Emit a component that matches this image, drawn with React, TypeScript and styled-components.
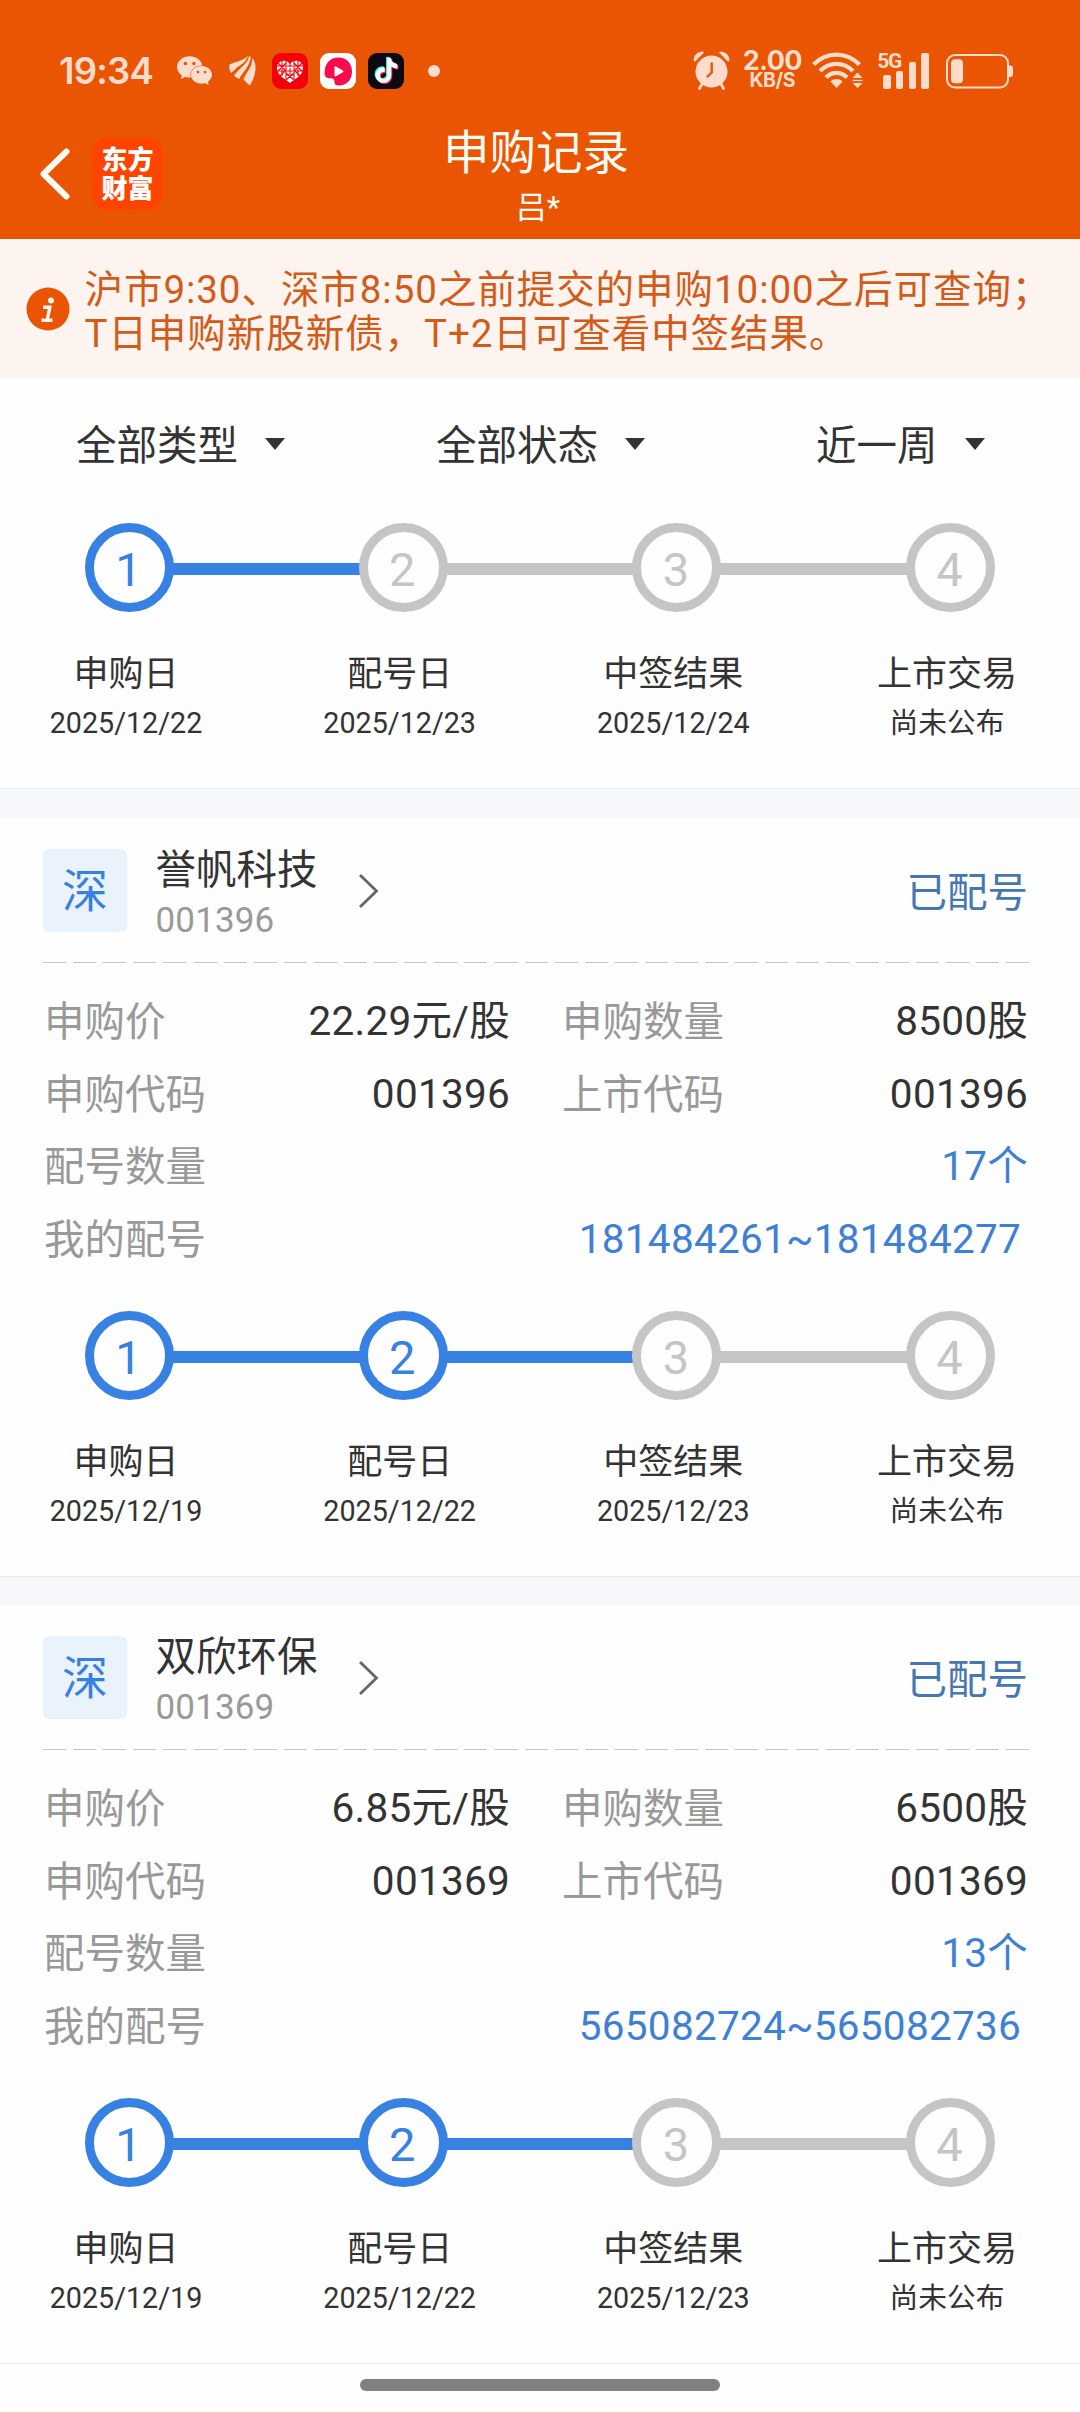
import React from "react";
import styled, { createGlobalStyle } from "styled-components";
import { SiTiktok, SiWechat } from "react-icons/si";

const GlobalStyle = createGlobalStyle`
  * { box-sizing: border-box; }
  body {
    margin: 0;
    background: #fefefe;
    color: #333;
    font-family: Roboto, "Noto Sans CJK SC", sans-serif;
  }
`;

const BLUE = "#3681e2";
const GREY = "#c5c5c5";
const STATUS_INK = "#fddccb";

const Screen = styled.main`
  width: 1080px;
  height: 2412px;
  display: flex;
  flex-direction: column;
  overflow: hidden;
`;

const Header = styled.header`
  height: 239px;
  flex: none;
  background: #e95503;
  color: #fffaf2;
`;

const StatusBar = styled.div`
  height: 118px;
  padding: 23px 66px 0 59px;
  display: flex;
  align-items: center;
  color: ${STATUS_INK};

  svg {
    display: block;
    flex: none;
  }
`;

const Clock = styled.span`
  width: 93px;
  font: 600 36.5px/40px Inter, sans-serif;
  letter-spacing: -0.8px;
  white-space: nowrap;
`;

const WechatSlot = styled.span`
  margin-left: 25px;
`;

const WingSlot = styled.span`
  margin-left: 17px;
`;

const AppTiles = styled.span`
  display: flex;
  gap: 12px;
  margin-left: 16px;
`;

const AppTile = styled.span<{ $bg: string }>`
  position: relative;
  width: 36px;
  height: 36px;
  border-radius: 9px;
  background: ${(p) => p.$bg};
  overflow: hidden;
`;

const TikTokLayer = styled(SiTiktok)<{ $dx: number; $dy: number }>`
  position: absolute;
  left: ${(p) => 5.5 + p.$dx}px;
  top: ${(p) => 5 + p.$dy}px;
`;

const MoreDot = styled.span`
  width: 12px;
  height: 12px;
  margin-left: 24px;
  border-radius: 50%;
  background: ${STATUS_INK};
`;

const StatusRight = styled.div`
  display: flex;
  align-items: center;
  margin-left: auto;
`;

const NetSpeed = styled.span`
  display: flex;
  flex-direction: column;
  align-items: center;
  width: 60px;
  margin: 0 10px 0 12px;
  padding-bottom: 2px;
  font-family: Inter, sans-serif;
  font-weight: 700;
  white-space: nowrap;
`;

const SpeedValue = styled.span`
  font-size: 27px;
  line-height: 21px;
  letter-spacing: -0.6px;
`;

const SpeedUnit = styled.span`
  font-size: 19.5px;
  line-height: 19px;
  letter-spacing: -0.4px;
`;

const Signal = styled.span`
  display: flex;
  align-items: flex-end;
  height: 36px;
  margin: 0 12px 0 14px;
`;

const NetworkType = styled.span`
  align-self: flex-start;
  width: 6px;
  font: 700 21px/16px "Roboto", sans-serif;
  letter-spacing: -1.4px;
`;

const Bar = styled.i<{ $h: number }>`
  width: 7.5px;
  height: ${(p) => p.$h}px;
  margin-right: 5.2px;
  border-radius: 2px;
  background: ${STATUS_INK};
`;

const NavBar = styled.nav`
  height: 121px;
  display: grid;
  grid-template-columns: 300px 1fr 308px;
`;

const NavLeft = styled.div`
  display: flex;
  align-items: center;
  padding: 0 0 10px 38px;
`;

const BrandLogo = styled.div`
  width: 71px;
  height: 72px;
  margin-left: 21px;
  padding-bottom: 3px;
  display: flex;
  flex-direction: column;
  align-items: center;
  justify-content: center;
  border-radius: 16px;
  background: #ff4400;
  color: #fff;
  font: 900 26px/29px "Noto Sans CJK SC", sans-serif;
`;

const NavTitle = styled.div`
  display: flex;
  flex-direction: column;
  align-items: center;
  padding-top: 5px;
`;

const Title = styled.h1`
  margin: 0;
  font-weight: 400;
  font-size: 46.5px;
  line-height: 60px;
`;

const Account = styled.span`
  margin: 5px 0 0 4px;
  font-size: 31px;
  line-height: 40px;
`;

const Notice = styled.section`
  height: 139px;
  flex: none;
  display: flex;
  align-items: center;
  padding: 0 25.5px 0;
  background: #fef4ef;
  color: #d35b1a;
`;

const NoticeText = styled.p`
  margin: 0 0 0 15px;
  padding-top: 6px;
  font-size: 38.5px;
  line-height: 44px;
  letter-spacing: 0.95px;
  white-space: nowrap;
`;

const Filters = styled.div`
  height: 132px;
  flex: none;
  display: grid;
  grid-template-columns: 360px 380px auto;
  align-items: center;
  padding: 4px 0 0 76px;
`;

const FilterButton = styled.button`
  display: flex;
  align-items: center;
  gap: 27px;
  padding: 0;
  border: 0;
  background: none;
  color: #333;
  font: 400 40.5px/54px Roboto, "Noto Sans CJK SC", sans-serif;
`;

const Caret = styled.i`
  border: 10px solid transparent;
  border-top: 12px solid #333;
  border-bottom: 0;
  margin-top: -5px;
`;

const StepsBlock = styled.div`
  height: 279px;
  padding-top: 13px;
  border-bottom: 1px solid #e9eaed;
  flex: none;
`;

const Track = styled.div`
  display: flex;
  align-items: center;
  height: 89px;
  padding: 0 85px;
`;

const StepDot = styled.span<{ $on: boolean }>`
  width: 89px;
  height: 89px;
  flex: none;
  display: grid;
  place-content: center;
  padding: 4px 2px 0 0;
  border: 9px solid ${(p) => (p.$on ? BLUE : GREY)};
  border-radius: 50%;
  color: ${(p) => (p.$on ? BLUE : GREY)};
  font-size: 47px;
  line-height: 60px;
`;

const StepLine = styled.span<{ $on: boolean }>`
  flex: 1;
  height: 12px;
  margin: 3px -2px 0;
  background: ${(p) => (p.$on ? BLUE : GREY)};
`;

const StepLabels = styled.div`
  display: flex;
  justify-content: space-between;
  padding: 40px 43px 0 36px;
`;

const StepLabel = styled.div`
  width: 180px;
  display: flex;
  flex-direction: column;
  align-items: center;
  white-space: nowrap;
`;

const StepName = styled.span`
  font-size: 35px;
  line-height: 46px;
`;

const StepDate = styled.span`
  margin-top: 5px;
  font-size: 28.7px;
  line-height: 40px;
`;

const Gap = styled.div<{ $h: number }>`
  height: ${(p) => p.$h}px;
  flex: none;
  background: #f6f8fb;
`;

const Card = styled.article`
  flex: none;
`;

const CardHead = styled.div`
  height: 144px;
  display: flex;
  align-items: center;
  padding: 0 52px 0 43px;
`;

const Market = styled.span`
  width: 84px;
  height: 83px;
  display: grid;
  place-content: center;
  padding-top: 2px;
  border-radius: 6px;
  background: #eaf2fc;
  color: ${BLUE};
  font-size: 46px;
  line-height: 60px;
`;

const Stock = styled.div`
  display: flex;
  flex-direction: column;
  margin-left: 28.5px;
  padding-top: 11px;
`;

const StockName = styled.span`
  font-size: 40.5px;
  line-height: 50px;
`;

const StockCode = styled.span`
  color: #999;
  font-size: 35px;
  line-height: 51px;
  letter-spacing: 0.15px;
`;

const Chevron = styled.svg`
  margin: 1px 0 0 39px;
`;

const State = styled.span`
  margin-left: auto;
  padding-top: 5px;
  color: #4577b3;
  font-size: 40.5px;
  line-height: 54px;
`;

const Dashes = styled.div`
  height: 1px;
  margin: 0 51px 0 43px;
  background: repeating-linear-gradient(90deg, #c4c4c4 0 23px, transparent 23px 30.1px);
`;

const Rows = styled.div`
  height: 335px;
  padding: 22px 52px 0 44px;
`;

const Row = styled.div`
  height: 72.5px;
  display: grid;
  grid-template-columns: 466px 1fr;
  column-gap: 52px;
`;

const WideRow = styled(Row)`
  grid-template-columns: 1fr;
`;

const Field = styled.div`
  display: flex;
  align-items: center;
  justify-content: space-between;
  font-size: 40.5px;
  line-height: 54px;
  white-space: nowrap;
`;

const FieldName = styled.span`
  padding-top: 2px;
  color: #999;
`;

const FieldValue = styled.span<{ $link?: boolean; $inset?: number }>`
  margin-right: ${(p) => p.$inset ?? 0}px;
  color: ${(p) => (p.$link ? "#3d80d4" : "#333")};
  letter-spacing: 0.26px;
`;

const HomeArea = styled.footer`
  flex: 1;
  display: flex;
  justify-content: center;
  padding-top: 15px;
`;

const HomeBar = styled.span`
  width: 360px;
  height: 12px;
  border-radius: 6px;
  background: #808080;
`;

const WingIcon = () => (
  <svg width="27" height="31" viewBox="0 0 27 31" fill={STATUS_INK}>
    <path d="M0 10C6 6 13 7 19 .8C16 9 11.500 9.500 7 13.500C5 15.200 3.500 16.800 2 18C1 16 0 13 0 10Z" />
    <path d="M20 1.200C19 9 10 13 5 20.500C6.500 22.300 8 23.200 10.300 24C13 17.500 21 12 21.800 1.800Z" />
    <path d="M23.400 3C26 6 26.700 10 26.500 14C26 21 23.500 26 21 30.500C18 28.500 16.500 26.500 14.500 24.500C17 17.500 23.300 12 23.400 3Z" />
  </svg>
);

const HeartTileIcon = () => (
  <svg width="36" height="36" viewBox="0 0 36 36">
    <path d="M10 8C13 7 16 8 18 11C20 8 23 7 26 8C30 9 32 12 30.500 18C29 23 23 26 18 30C13 26 7 23 5.500 18C4 12 6 9 10 8Z" fill="#fff" />
    <g stroke="#f40009" strokeWidth="1.100" fill="none">
      <path d="M10 8V23M14 8V27M22 8V27M26 8V23M5 13H14M22 13H31M5 18H14M22 18H31M14 22H22M18 10V14M15 18H21M18 15V21" />
      <path d="M6 10L14 18M14 10L6 18M22 10L30 18M30 10L22 18M8 23L14 17M28 23L22 17M14 27L22 20M22 27L14 20M15 13H21" />
    </g>
  </svg>
);

const PlayTileIcon = () => (
  <svg width="36" height="36" viewBox="0 0 36 36">
    <path d="M4.500 20.500C4.500 10.500 10 4.500 18.500 4.500C26.500 4.500 32 10.500 32 18.500C32 27 26.500 32.500 19 32.500C16 32.500 14.500 31.500 14.500 29.500C14.500 26.500 13.500 25.300 10.500 25.300C7 25.300 4.500 24 4.500 20.500Z" fill="#fb0b4e" />
    <path d="M14.500 14.200C14.500 13.300 15.300 13 16 13.400L22.800 17.500C23.500 18 23.500 18.800 22.800 19.300L16 23.300C15.300 23.700 14.500 23.300 14.500 22.500Z" fill="#fff" />
  </svg>
);

const AlarmIcon = () => (
  <svg width="37" height="39" viewBox="0 0 37 39" fill={STATUS_INK}>
    <path d="M.6 9.500C.3 4 5 .3 9.500 .4C10.500 .5 11 1.200 10.600 2L3 9.800C2 10.800 .8 10.600 .6 9.500Z" />
    <path d="M36.400 9.500C36.700 4 32 .3 27.500 .4C26.500 .5 26 1.200 26.400 2L34 9.800C35 10.800 36.200 10.600 36.400 9.500Z" />
    <circle cx="18.500" cy="20.500" r="16" />
    <path d="M9 33L6.500 37.500M28 33L30.500 37.500" stroke={STATUS_INK} strokeWidth="2.800" strokeLinecap="round" />
    <path d="M18.700 12.500V21.500L14.500 25.500" fill="none" stroke="#e95503" strokeWidth="2.400" strokeLinecap="round" />
  </svg>
);

const WifiIcon = () => (
  <svg width="51" height="37" viewBox="0 0 51 37" fill="none" stroke={STATUS_INK} strokeWidth="4.300">
    <path d="M1.500 12.500C14.500 -.8 34.500 -.8 47.500 12.500" />
    <path d="M8 19C17.500 9.500 31.500 9.500 41 19" />
    <path d="M14 25.500C20 19.300 29 19.300 35 25.500" />
    <path d="M18.500 29.500C22 26.300 27 26.300 30.500 29.500L24.500 36Z" fill={STATUS_INK} stroke="none" />
    <path d="M40.500 26L45.500 20.500L50.500 26ZM40.500 31L45.500 36L50.500 31Z" fill={STATUS_INK} stroke="none" />
    <path d="M40.500 28.500H50.500" strokeWidth="1.300" />
  </svg>
);

const BatteryIcon = () => (
  <svg width="68" height="36" viewBox="0 0 68 36">
    <rect x="1" y="2" width="61" height="32.500" rx="8" fill="none" stroke={STATUS_INK} strokeWidth="2" />
    <rect x="5" y="6.300" width="12" height="24" rx="4" fill={STATUS_INK} />
    <path d="M63 12.500H64.500C66 12.500 67 13.500 67 15V21.500C67 23 66 24 64.500 24H63Z" fill={STATUS_INK} />
  </svg>
);

const BackIcon = () => (
  <svg width="33" height="54" viewBox="0 0 33 54" fill="none" stroke="#fffaf2" strokeWidth="6" strokeLinecap="round" strokeLinejoin="round">
    <path d="M28.500 4.500L5.500 27L28.500 49.500" />
  </svg>
);

const InfoIcon = () => (
  <svg width="44" height="44" viewBox="0 0 44 44">
    <circle cx="22" cy="22" r="21.500" fill="#e95503" />
    <circle cx="25" cy="13.500" r="3" fill="#fff4ee" />
    <path d="M17 20.200H23.800L21.300 33M15.500 33.300H26.500" fill="none" stroke="#fff4ee" strokeWidth="3.400" />
  </svg>
);

type Step = { name: string; date: string };

const steps = (a: string, b: string, c: string): Step[] => [
  { name: "申购日", date: a },
  { name: "配号日", date: b },
  { name: "中签结果", date: c },
  { name: "上市交易", date: "尚未公布" },
];

function Steps({ items, done }: { items: Step[]; done: number }) {
  return (
    <StepsBlock>
      <Track>
        {items.map((_, i) => (
          <React.Fragment key={i}>
            {i > 0 && <StepLine $on={i <= done} />}
            <StepDot $on={i < done}>{i + 1}</StepDot>
          </React.Fragment>
        ))}
      </Track>
      <StepLabels>
        {items.map((s) => (
          <StepLabel key={s.name}>
            <StepName>{s.name}</StepName>
            <StepDate>{s.date}</StepDate>
          </StepLabel>
        ))}
      </StepLabels>
    </StepsBlock>
  );
}

type Subscription = {
  name: string;
  code: string;
  price: string;
  amount: string;
  count: string;
  range: string;
};

const subscriptions: Subscription[] = [
  { name: "誉帆科技", code: "001396", price: "22.29元/股", amount: "8500股", count: "17个", range: "181484261~181484277" },
  { name: "双欣环保", code: "001369", price: "6.85元/股", amount: "6500股", count: "13个", range: "565082724~565082736" },
];

function SubscriptionCard({ item }: { item: Subscription }) {
  return (
    <Card>
      <CardHead>
        <Market>深</Market>
        <Stock>
          <StockName>{item.name}</StockName>
          <StockCode>{item.code}</StockCode>
        </Stock>
        <Chevron width="24" height="36" viewBox="0 0 24 36" fill="none" stroke="#666" strokeWidth="2.800">
          <path d="M3 2L19.500 18L3 34" />
        </Chevron>
        <State>已配号</State>
      </CardHead>
      <Dashes />
      <Rows>
        <Row>
          <Field><FieldName>申购价</FieldName><FieldValue>{item.price}</FieldValue></Field>
          <Field><FieldName>申购数量</FieldName><FieldValue>{item.amount}</FieldValue></Field>
        </Row>
        <Row>
          <Field><FieldName>申购代码</FieldName><FieldValue>{item.code}</FieldValue></Field>
          <Field><FieldName>上市代码</FieldName><FieldValue>{item.code}</FieldValue></Field>
        </Row>
        <WideRow>
          <Field><FieldName>配号数量</FieldName><FieldValue $link>{item.count}</FieldValue></Field>
        </WideRow>
        <WideRow>
          <Field><FieldName>我的配号</FieldName><FieldValue $link $inset={7}>{item.range}</FieldValue></Field>
        </WideRow>
      </Rows>
      <Steps items={steps("2025/12/19", "2025/12/22", "2025/12/23")} done={2} />
    </Card>
  );
}

export default function App() {
  return (
    <Screen>
      <GlobalStyle />
      <Header>
        <StatusBar>
          <Clock>19:34</Clock>
          <WechatSlot><SiWechat size={35} /></WechatSlot>
          <WingSlot><WingIcon /></WingSlot>
          <AppTiles>
            <AppTile $bg="#f40009"><HeartTileIcon /></AppTile>
            <AppTile $bg="#ffffff"><PlayTileIcon /></AppTile>
            <AppTile $bg="#0b0a12">
              <TikTokLayer size={25} color="#25f4ee" $dx={-1} $dy={-1} />
              <TikTokLayer size={25} color="#fe2c55" $dx={1} $dy={1} />
              <TikTokLayer size={25} color="#ffffff" $dx={0} $dy={0} />
            </AppTile>
          </AppTiles>
          <MoreDot />
          <StatusRight>
            <AlarmIcon />
            <NetSpeed>
              <SpeedValue>2.00</SpeedValue>
              <SpeedUnit>KB/S</SpeedUnit>
            </NetSpeed>
            <WifiIcon />
            <Signal>
              <NetworkType>5G</NetworkType>
              <Bar $h={14} />
              <Bar $h={18} />
              <Bar $h={27} />
              <Bar $h={36} />
            </Signal>
            <BatteryIcon />
          </StatusRight>
        </StatusBar>
        <NavBar>
          <NavLeft>
            <BackIcon />
            <BrandLogo>
              <span>东方</span>
              <span>财富</span>
            </BrandLogo>
          </NavLeft>
          <NavTitle>
            <Title>申购记录</Title>
            <Account>吕*</Account>
          </NavTitle>
        </NavBar>
      </Header>
      <Notice>
        <InfoIcon />
        <NoticeText>
          沪市9:30、深市8:50之前提交的申购10:00之后可查询；<br />
          T日申购新股新债，T+2日可查看中签结果。
        </NoticeText>
      </Notice>
      <Filters>
        <FilterButton>全部类型<Caret /></FilterButton>
        <FilterButton>全部状态<Caret /></FilterButton>
        <FilterButton>近一周<Caret /></FilterButton>
      </Filters>
      <Steps items={steps("2025/12/22", "2025/12/23", "2025/12/24")} done={1} />
      <Gap $h={29} />
      <SubscriptionCard item={subscriptions[0]} />
      <Gap $h={28} />
      <SubscriptionCard item={subscriptions[1]} />
      <HomeArea>
        <HomeBar />
      </HomeArea>
    </Screen>
  );
}
